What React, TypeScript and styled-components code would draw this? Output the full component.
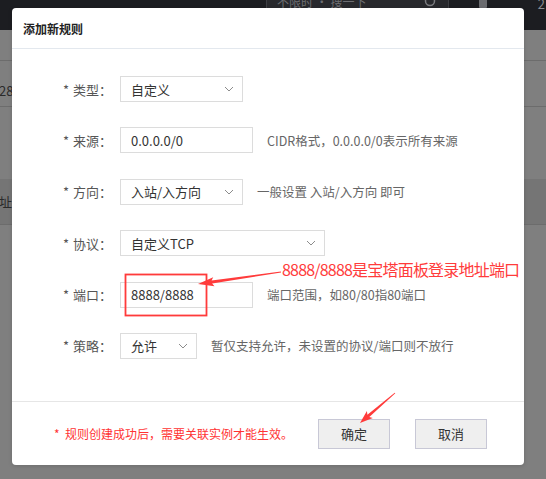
import React from 'react'
import styled, { createGlobalStyle } from 'styled-components'

const GlobalStyle = createGlobalStyle`
  body {
    margin: 0;
    font-family: "Noto Sans CJK SC", "Noto Sans", sans-serif;
  }
`

const Page = styled.div`
  position: relative;
  width: 546px;
  height: 479px;
  overflow: hidden;
  background: #7f7f7f;
`

const TopBar = styled.div`
  height: 30px;
  background: #1c1d21;
  display: flex;
  align-items: flex-start;
`

const SearchBox = styled.div`
  margin: -12px 0 0 266px;
  width: 183px;
  height: 26px;
  box-sizing: border-box;
  border: 1px solid #3d3e43;
  background: #28292d;
  display: flex;
  align-items: center;
  justify-content: space-between;
  padding: 0 12px 0 10px;
  font-size: 12px;
  color: #6d6e72;
`

const UserMark = styled.div`
  margin: -4px 0 0 30px;
  width: 8px;
  height: 12px;
  border-radius: 4px 4px 1px 1px;
  background: #6a6b6f;
`

const Corner = styled.div`
  margin: -6px 0 0 auto;
  padding-right: 1px;
  font-size: 13px;
  color: #8a8b8f;
`

const TableRow = styled.div<{ $h: number; $band?: boolean; $line?: boolean }>`
  height: ${p => p.$h}px;
  box-sizing: border-box;
  background: ${p => (p.$band ? '#757575' : '#7f7f7f')};
  border-bottom: ${p => (p.$line ? '1px solid #6c6c6c' : 'none')};
  display: flex;
  align-items: center;
  font-size: 13px;
  color: #2a2a2a;
`

const CellText = styled.span<{ $shift: number; $top?: number }>`
  margin-left: ${p => p.$shift}px;
  margin-top: ${p => p.$top ?? 0}px;
  white-space: nowrap;
`

const Modal = styled.div`
  position: absolute;
  left: 12px;
  top: 8px;
  width: 512px;
  height: 457px;
  background: #fff;
  border-radius: 4px;
  display: flex;
  flex-direction: column;
  box-shadow: 0 1px 4px rgba(0, 0, 0, 0.15);
`

const Header = styled.div`
  height: 40px;
  border-bottom: 1px solid #e3e8ee;
  padding-left: 11px;
  display: flex;
  align-items: center;
  font-size: 12px;
  font-weight: 600;
  color: #222;
`

const Body = styled.div`
  flex: 1;
  padding: 27px 0 0 51px;
  display: flex;
  flex-direction: column;
  gap: 25.4px;
`

const FormRow = styled.div`
  height: 26px;
  display: flex;
  align-items: center;
`

const Label = styled.div`
  width: 57px;
  display: flex;
  font-size: 13px;
  color: #555;
`

const Star = styled.span`
  width: 10px;
`

const Field = styled.div<{ $w: number }>`
  width: ${p => p.$w}px;
  height: 26px;
  box-sizing: border-box;
  border: 1px solid #dcdcdc;
  padding: 0 8px 0 10px;
  display: flex;
  align-items: center;
  justify-content: space-between;
  font-size: 13px;
  color: #333;
`

const Help = styled.span`
  margin-left: 14px;
  font-size: 12.5px;
  color: #666;
  white-space: nowrap;
`

const Footer = styled.div`
  height: 64px;
  box-sizing: border-box;
  border-top: 1px solid #e6e6e6;
  padding: 0 37px 0 42px;
  display: flex;
  align-items: center;
  gap: 25px;
`

const Note = styled.span`
  margin-right: auto;
  font-size: 12px;
  color: #f33;
  white-space: nowrap;
`

const Button = styled.div`
  width: 76px;
  height: 30px;
  box-sizing: border-box;
  border: 1px solid #c8c8d6;
  background: #efefef;
  display: flex;
  align-items: center;
  justify-content: center;
  font-size: 13px;
  color: #333;
`

const Overlay = styled.svg`
  position: absolute;
  left: 0;
  top: 0;
  pointer-events: none;
`

const Callout = styled.div`
  position: absolute;
  left: 282px;
  top: 259px;
  font-size: 16px;
  line-height: 20px;
  letter-spacing: -0.8px;
  color: #ff3b3b;
  white-space: nowrap;
`

const Chevron = () => (
  <svg width="10" height="6" viewBox="0 0 10 6">
    <path d="M1 1 L5 5 L9 1" fill="none" stroke="#8c8c8c" strokeWidth="1" />
  </svg>
)

// tapered annotation arrow, thin at the tail, head at the tip
const arrowPoints = (tx: number, ty: number, hx: number, hy: number, head: number) => {
  const dx = hx - tx
  const dy = hy - ty
  const len = Math.hypot(dx, dy)
  const ux = dx / len
  const uy = dy / len
  const nx = -uy
  const ny = ux
  const bx = hx - ux * head
  const by = hy - uy * head
  const wx = hx - ux * (head + 2)
  const wy = hy - uy * (head + 2)
  const pts = [
    [tx + nx * 0.4, ty + ny * 0.4],
    [bx + nx * 1.5, by + ny * 1.5],
    [wx + nx * 4.5, wy + ny * 4.5],
    [hx, hy],
    [wx - nx * 4.5, wy - ny * 4.5],
    [bx - nx * 1.5, by - ny * 1.5],
    [tx - nx * 0.4, ty - ny * 0.4],
  ]
  return pts.map(p => p.map(v => v.toFixed(1)).join(',')).join(' ')
}

interface Row {
  label: string
  value: string
  width: number
  select?: boolean
  help?: string
}

const rows: Row[] = [
  { label: '类型：', value: '自定义', width: 123, select: true },
  { label: '来源：', value: '0.0.0.0/0', width: 133, help: 'CIDR格式，0.0.0.0/0表示所有来源' },
  { label: '方向：', value: '入站/入方向', width: 123, select: true, help: '一般设置 入站/入方向 即可' },
  { label: '协议：', value: '自定义TCP', width: 205, select: true },
  { label: '端口：', value: '8888/8888', width: 133, help: '端口范围，如80/80指80端口' },
  { label: '策略：', value: '允许', width: 77, select: true, help: '暂仅支持允许，未设置的协议/端口则不放行' },
]

const App = () => {
  return (
    <Page>
      <GlobalStyle />
      <TopBar>
        <SearchBox>
          <span>不限时 · 搜一下</span>
          <svg width="12" height="12" viewBox="0 0 12 12">
            <circle cx="6" cy="6" r="4.5" fill="none" stroke="#7a7b7f" strokeWidth="1.5" />
          </svg>
        </SearchBox>
        <UserMark />
        <Corner>2</Corner>
      </TopBar>
      <TableRow $h={31} $line />
      <TableRow $h={46} $line>
        <CellText $shift={-1} $top={14}>28</CellText>
      </TableRow>
      <TableRow $h={72} />
      <TableRow $h={46} $band $line>
        <CellText $shift={-14}>地址</CellText>
      </TableRow>

      <Modal>
        <Header>添加新规则</Header>
        <Body>
          {rows.map(r => (
            <FormRow key={r.label}>
              <Label>
                <Star>*</Star>
                {r.label}
              </Label>
              <Field $w={r.width}>
                <span>{r.value}</span>
                {r.select && <Chevron />}
              </Field>
              {r.help && <Help>{r.help}</Help>}
            </FormRow>
          ))}
        </Body>
        <Footer>
          <Note>*&nbsp; 规则创建成功后，需要关联实例才能生效。</Note>
          <Button>确定</Button>
          <Button>取消</Button>
        </Footer>
      </Modal>

      <Overlay width="546" height="479" viewBox="0 0 546 479">
        <rect x="125.5" y="274.5" width="81" height="41" fill="none" stroke="#ff3b3b" strokeWidth="1.8" />
        <polygon points={arrowPoints(281, 272, 198, 284, 14)} fill="#ff3b3b" />
        <polygon points={arrowPoints(395, 393, 360, 423, 11)} fill="#ff3b3b" />
      </Overlay>
      <Callout>8888/8888是宝塔面板登录地址端口</Callout>
    </Page>
  )
}

export default App
